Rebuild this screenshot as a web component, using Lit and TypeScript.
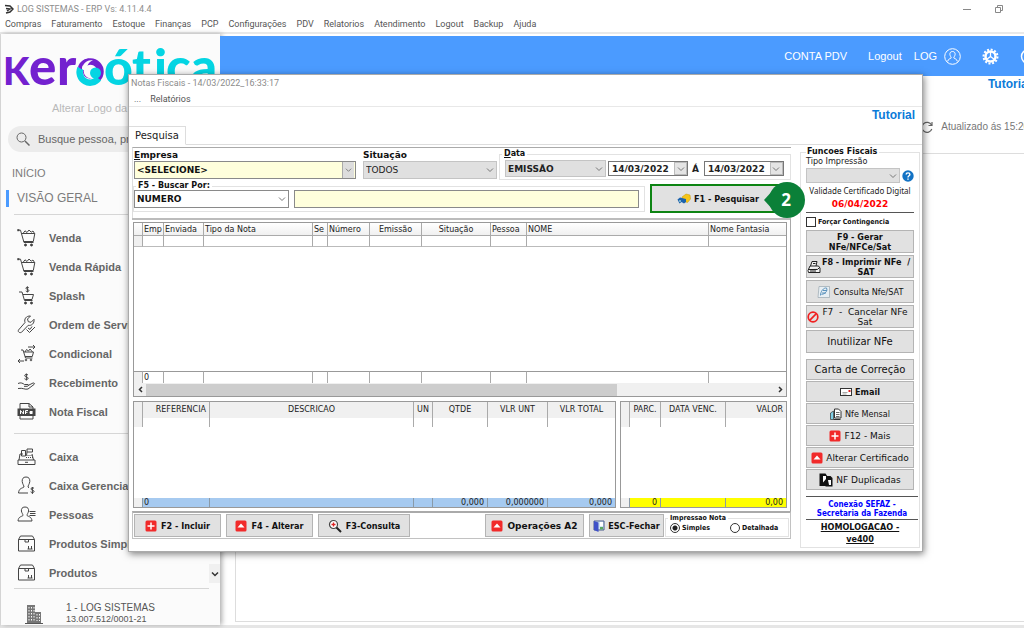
import { LitElement, html, css, svg, TemplateResult } from "lit";
import { customElement } from "lit/decorators.js";
import { classMap } from "lit/directives/class-map.js";

const icon = (name: string, box: string, body: TemplateResult) =>
  html`<svg class="icon ${name}" viewBox=${box} aria-hidden="true">${body}</svg>`;

const cart = svg`<path d="M.8 2.200h2.700L7 14.500h9.500M4.800 5.500h13l-1.500 8H6.700"/><path d="M6 5.500l2-2.700 2 1.700 2-2.500 2.200 2.200L16 3l1.500 2.500"/><circle cx="8.500" cy="17" r="1" fill="#333"/><circle cx="14.500" cy="17" r="1" fill="#333"/><path d="M.3 2.200h2" stroke-width="2"/>`;
const box = svg`<path d="M1.500 5.500h16v11.500h-16zM1.500 5.500l2-3.500h12l2 3.500M8 5.500v2.500h3.500V5.500M11.500 12v3M14.500 12v3M10.500 15h5"/>`;

const navIcons: Record<string, TemplateResult> = {
  cart,
  splash: svg`<path d="M2 6h3l2.500 8.500h8M6 8.500h10.500l-1.500 5H7.300"/><circle cx="8.500" cy="17" r="1" fill="#333"/><circle cx="14.500" cy="17" r="1" fill="#333"/><path d="M11.800 1.800c-1-1-3-.6-2.800.6.2 1.200 2.800.8 2.900 2.100.1 1.300-2.200 1.500-3.100.4M10.400.4v6"/>`,
  wrench: svg`<path d="M1.500 15l6.500-7.500C7 4 9 .8 13.500 1l-3 3 .8 2.700 2.700.6 3-3c.6 4-2.300 6.700-5.800 6l-6.700 7c-1.800 1-4-.5-3-2.300z"/><path d="M9.500 14.500l3 3L18 12M11 13l2 1.500 2-3"/>`,
  swap: svg`<path d="M4 6h2l2.500 8h7M7 8h9.500l-1.200 4.500H8"/><path d="M8 8l1.500-2.500L11.500 7l1.500-2 2.500 3M11 3h7M16 1l2 2-2 2M7 17H1M3 15l-2 2 2 2"/><circle cx="9" cy="16" r=".8"/><circle cx="14" cy="16" r=".8"/>`,
  hand: svg`<path d="M1 10.500c3-1.500 5 0 6.500 1h3.500c1 .8 0 1.800-1 1.800H7M11 12.500l5-2.500c1.500-.3 2 .8 1 1.500l-6 4.500c-3 1-5-1.500-10-.5"/><path d="M11 2c-1-1-3.500-.7-3.300.8.2 1.400 3.400.9 3.500 2.400.1 1.400-2.500 1.800-3.700.5M9.400.5v7"/>`,
  nfe: svg`<path d="M3 7V1.500h9L16 5v2M3 13.500V17h13v-3.500M12 1.500V5h4"/><rect x="1" y="7" width="17" height="6.500" fill="#444"/><path stroke="#fff" d="M3.500 12V8.500L6.500 12V8.500M8.500 12V8.500h2.500M8.500 10.300h2M15.500 11.500h-2.500v-2h2.300v1H13"/>`,
  register: svg`<path d="M1 13h17v4.500H1zM2 13l1-6h3M16.500 13l-1.500-6M4.500 3.500h4v5.500h-4zM10 2h5.500v3H10zM10 5l-.5 3.500M8 15.300h3"/><path stroke-dasharray="1 1" d="M9.500 8.500h6M9 10.500h7"/>`,
  manager: svg`<path d="M9 1c-3 0-4 2-3.800 4.500C5.500 8 7 9.500 7 11c-2 1.500-5 1-5.500 6H11M9 1c3 0 4 2 3.800 4.500C12.500 8 11 9.500 11 11l1 .8"/><path d="M17 12.300c-1-1-3.300-.6-3 .8.3 1.300 3 .9 3.100 2.300.1 1.300-2.400 1.500-3.500.4M15.400 11v7"/>`,
  people: svg`<path d="M8 2c-3 0-3.800 2-3.600 4 .3 2 1.600 3 1.600 4.500-2 1.500-4.500 1-5 5.500h14c-.5-4.500-3-4-5-5.500 0-1.500 1.300-2.500 1.600-4.500C11.800 4 11 2 8 2zM12.500 6.500h6M13 8.500h5.500M12.500 10.500h6"/>`,
  box,
};

const art = {
  plus: icon("s12", "0 0 12 12", svg`<rect x=".5" y=".5" width="11" height="11" rx="1.500" fill="#f12a2a"/><path d="M6 2.500v7M2.500 6h7" stroke="#fff" stroke-width="1.500"/>`),
  up: icon("s12", "0 0 12 12", svg`<rect x=".5" y=".5" width="11" height="11" rx="1.500" fill="#f12a2a"/><path d="M6 3.500l3.500 4h-7z" fill="#fff"/>`),
  lens: icon("s14", "0 0 14 14", svg`<circle cx="5.500" cy="5.500" r="4" fill="#fff" stroke="#444" stroke-width="1.200"/><path d="M5.500 3.500v4M3.500 5.500h4" stroke="#d22" stroke-width="1.300"/><path d="M8.500 8.500l4.500 4.500" stroke="#222" stroke-width="2"/>`),
  door: icon("s12", "0 0 12 12", svg`<path d="M1 1h10v9H1z" fill="#cfe6f4" stroke="#4a5a8a"/><path d="M1 1l4.500 1.500V12L1 10z" fill="#3f51c8"/><path d="M7 2h3v4H7z" fill="#fff"/><path d="M7 7h3v2.500H7z" fill="#5aa860"/>`),
  search: icon("s14", "0 0 14 14", svg`<path d="M5 5l4-3 4 1 .5 4-3 3.500L6 9z" fill="#f5c518" stroke="#c79400" stroke-width=".5"/><path d="M.5 7.500L3 5.500l6 1.500v3L7 11.500 4.500 10l-2 1.500z" fill="#1d63ad"/><circle cx="3" cy="9" r="1" fill="#9cd"/>`),
  print: icon("s14", "0 0 14 14", svg`<path d="M3.500 6L5 1.500h5L9 6M1 10.500l2-4.500h8.500l1.500 2v4.500H1.500zM1 9.500h9.500l2-2M3 11h6M6 3.500h2.500" fill="#f4f4f4" stroke="#222"/>`),
  note: icon("s14", "0 0 14 14", svg`<path d="M2 1.500h10.500v11H1z" fill="#e8eff4" stroke="#9aa8b0" stroke-width=".7"/><path d="M3.500 10.500c0-4 3-8 6-7.500 1.500 3-1.500 6-5 6.500M5 8h4M6 5.500h4" fill="none" stroke="#5c93bd"/>`),
  ban: icon("s12", "0 0 12 12", svg`<circle cx="6" cy="6" r="4.800" fill="none" stroke="#f02020" stroke-width="1.700"/><path d="M9.300 2.700L2.700 9.300" stroke="#f02020" stroke-width="1.700"/>`),
  mail: icon("s12", "0 0 12 12", svg`<rect x=".5" y="2.500" width="11" height="7" fill="#fff" stroke="#333"/><path d="M2.500 6.500h5M2.500 8h4" stroke="#aaa"/><path d="M8.500 4h2v2h-2z" fill="#e02020"/>`),
  month: icon("s12", "0 0 12 12", svg`<path d="M4.500 1h4l2.500 2.500V10H4.500z" fill="#fff" stroke="#333"/><path d="M6 4.500h3.500M6 6.500h3.500M6 8.500h3.500" stroke="#444" stroke-width=".8"/><path d="M.5 5l3-2v8.500h-3z" fill="#7fd0e6" stroke="#333" stroke-width=".7"/><path d="M3.500 11.500h7" stroke="#333"/>`),
  copies: icon("s14", "0 0 14 14", svg`<path d="M.5.5h6l2 3V13h-8zM6.500 3h5l2 2v8.500h-7z" fill="#111"/><path d="M4 3h3v3L4 9.500z" fill="#fff"/><path d="M9 7h3v5h-2z" fill="#fff"/>`),
};

const chevron = icon("chev", "0 0 8 8", svg`<path d="M1 2.500l3 3 3-3" fill="none" stroke="#777"/>`);

@customElement("app-root")
export class AppRoot extends LitElement {
  static styles = css`
    :host {
      display: flex;
      flex-direction: column;
      position: relative;
      box-sizing: border-box;
      height: 100vh;
      overflow: hidden;
      background: #fff;
      color: #222;
      font: 9px/12px "DejaVu Sans", sans-serif;
    }
    *, *::before { box-sizing: border-box; }
    button, input, select { font: inherit; color: inherit; margin: 0; border-radius: 0; }
    a { color: inherit; text-decoration: none; }
    .icon { display: block; flex: none; fill: none; }
    .s12 { width: 12px; height: 12px; }
    .s14 { width: 14px; height: 14px; }
    .chev { width: 8px; height: 8px; }

    /* main window */
    .caption { display: flex; align-items: center; height: 17px; padding: 0 20px 0 4px; gap: 3px; font: 9px/12px Roboto, sans-serif; color: #8d8d8d; flex: none; }
    .caption .grow { flex: 1; }
    .caption .wm { width: 10px; height: 10px; }
    .controls { display: flex; gap: 22px; }
    .menubar { display: flex; height: 17px; padding: 0 5px; gap: 10px; align-items: flex-start; border-bottom: 2px solid #e9e9e9; flex: none; }
    .menubar button, .dlg-menu button { border: 0; background: none; padding: 0; font: 9px/14px Roboto, sans-serif; color: #555; }
    .main { display: grid; grid-template-columns: 220px minmax(0, 1fr); flex: 1; min-height: 0; border-left: 1px solid #ddd; border-bottom: 3px solid #e6e6e6; }

    /* sidebar */
    .side { display: flex; flex-direction: column; background: #fbfbfb; font-family: "Liberation Sans", sans-serif; box-shadow: 2px 0 5px #aaa; min-height: 0; padding-top: 2px; margin-right: 1px; }
    .logo { display: block; width: 219px; height: 60px; flex: none; }
    .logo text { font-family: Lato, sans-serif; font-weight: 900; }
    .logo-link { color: #b9b9b9; font-size: 11px; line-height: 14px; padding: 5px 0 0 51px; }
    .find { display: flex; align-items: center; gap: 8px; height: 26px; margin: 11px 10px 0 7px; padding: 0 8px; border-radius: 13px; background: #ececec; flex: none; }
    .find input { border: 0; padding: 0; background: none; width: 100%; min-width: 0; font-size: 11px; }
    .find input::placeholder { color: #666; opacity: 1; }
    .sec { font-size: 11px; line-height: 14px; color: #7b7b7b; padding: 14px 0 0 11px; }
    .current { font-size: 12px; line-height: 17px; color: #7b7b7b; margin: 10px 0 7px 5px; padding-left: 8px; border-left: 3px solid #4b9bff; }
    .rule { border: 0; border-top: 1px solid #d6d6d6; margin: 0 11px 0 13px; flex: none; }
    .nav { display: flex; flex-direction: column; padding: 8px 0 7px 16px; flex: none; }
    .nav.last { padding-bottom: 1px; }
    .nav a { display: flex; align-items: center; gap: 13px; height: 29px; font-weight: bold; font-size: 11px; color: #666; }
    .nav-icon { width: 19px; height: 19px; stroke: #444; stroke-width: 1; }
    .scrollable { display: grid; grid-template-columns: 1fr 11px; align-items: end; }
    .scrollable .down { display: grid; place-items: center; height: 19px; margin-bottom: 5px; border: 0; padding: 0; background: #f0f0f0; }
    .down .icon path { stroke: #333; stroke-width: 1.500; }
    .company { display: flex; align-items: center; gap: 23px; padding: 13px 0 0 24px; color: #555; font-size: 10px; line-height: 12px; }
    .company small { display: block; font-size: 9px; line-height: 11px; }
    .building { width: 18px; height: 20px; }

    /* content behind the window */
    .content { display: flex; flex-direction: column; min-width: 0; font-family: "Liberation Sans", sans-serif; padding-top: 2px; }
    .top { display: flex; justify-content: flex-end; align-items: center; height: 40px; margin-left: -1px; background: #4b9bff; color: #fff; font-size: 11px; overflow: hidden; flex: none; position: relative; }
    .top a { display: flex; align-items: center; gap: 7px; margin-left: 21px; }
    .top a.user { margin-left: 12px; }
    .top a.cut { margin-right: -13px; }
    .s17 { width: 17px; height: 17px; }
    .tutorial { color: #0b7bd9; font: bold 12px/16px "Liberation Sans", sans-serif; }
    .content .tutorial { align-self: flex-end; margin-right: -7px; white-space: nowrap; }
    .updated { display: flex; align-items: center; align-self: flex-end; gap: 8px; margin: 28px -19px 0 0; font-size: 10px; line-height: 14px; color: #777; white-space: nowrap; }
    .card { flex: 1; margin: 19px 0 3px 14px; border: 1px solid #ddd; border-right: 0; }

    /* fiscal notes window */
    .dlg { position: absolute; top: 74px; left: 128px; right: 101px; background: #fff; border: 1px solid #aaa; box-shadow: 1px 2px 7px rgba(0, 0, 0, 0.5); padding-bottom: 3px; }
    .dlg-title { font: 9px/17px Roboto, sans-serif; color: #8b8b8b; padding-left: 2px; margin: 0; }
    .dlg-menu { display: flex; gap: 9px; height: 15px; padding-left: 5px; border-bottom: 1px solid #e8e8e8; align-items: flex-end; }
    .dlg-top { display: flex; justify-content: flex-end; height: 19px; padding: 0 7px 0 0; }
    .tabs { display: flex; height: 19px; border-bottom: 1px solid #ddd; }
    .tabs button { height: 19px; padding: 0 6px; border: 1px solid #ddd; border-bottom-color: #fff; border-left: 0; background: #fff; font-size: 10px; }
    .body { display: grid; grid-template-columns: minmax(0, 1fr) 120px; column-gap: 9px; padding: 2px 2px 0 3px; align-items: start; }
    fieldset { min-width: 0; margin: 0; padding: 0; border: 1px solid #e2e2e2; }
    legend { padding: 0 2px; margin-left: 2px; font-size: 8px; line-height: 8px; font-weight: bold; color: #111; }
    .filters { border-top: 1px solid #aaa; border-left: 1px solid #ddd; padding: 2px 0 5px; display: grid; gap: 2px; }
    .row-a { display: grid; grid-template-columns: 1fr 134px 292px; column-gap: 2px; padding-left: 1px; height: 30px; }
    .field { display: flex; flex-direction: column; min-width: 0; margin-right: 5px; }
    .field.wide { margin: 0; }
    .field label { font-weight: bold; line-height: 11px; color: #111; }
    u { text-underline-offset: 1px; }
    .sel { display: grid; grid-template-columns: minmax(0, 1fr) 14px; align-items: center; height: 18px; }
    .sel select { grid-area: 1 / 1 / 2 / 3; appearance: none; width: 100%; height: 100%; border: 1px solid #8a8a8a; background: #fff; padding: 0 2px; font-weight: bold; color: #111; }
    .sel .icon { grid-area: 1 / 2 / 2 / 3; pointer-events: none; justify-self: center; }
    .sel.cream select { background: #ffffdc; }
    .sel.cream .icon { background: #ddd; width: 12px; height: 16px; padding: 2px; border-left: 1px solid #aaa; justify-self: start; }
    .sel.gray select { background: #e0e0e0; border-color: #c4c4c4; color: #222; }
    .sel.plain select { font-weight: normal; }
    .dates { display: flex; align-items: center; padding: 2px 0 2px 5px; height: 21px; }
    .dates .sel { width: 101px; height: 17px; margin-right: 2px; }
    .dates b { margin: 0 5px 0 4px; }
    .date { display: flex; width: 80px; height: 15px; border: 1px solid #777; font-weight: bold; background: #fff; }
    .date input { flex: 1; min-width: 0; padding: 0 3px; border: 0; background: none; }
    .date button { width: 13px; padding: 0; border: 1px solid #bbb; background: #e4e4e4; display: grid; place-items: center; }
    .row-b { display: grid; grid-template-columns: minmax(0, 1fr) 141px; column-gap: 5px; height: 31px; }
    .by { height: 30px; }
    .by .in { display: flex; gap: 5px; padding: 0 5px 0 0; }
    .by .sel { width: 155px; }
    .cream-in { flex: 1; min-width: 0; height: 18px; border: 1px solid #8a8a8a; background: #ffffdc; padding: 0 3px; }
    .go { position: relative; padding: 2px 9px 0 0; }
    .go button { width: 100%; height: 29px; border: 2px solid #0d8413; background: #e1e1e1; padding: 0 6px 0 10px; }
    .step { position: absolute; top: 0; right: -14px; width: 41px; height: 36px; z-index: 2; }
    .step svg { display: block; width: 41px; height: 36px; }
    .step text { font: bold 17px "Open Sans", sans-serif; }
    .btn { display: flex; align-items: center; justify-content: center; gap: 3px; border: 1px solid #b4b4b4; background: #e1e1e1; padding: 0 2px; font: bold 9px/10px "DejaVu Sans Condensed", "DejaVu Sans", sans-serif; color: #111; }

    .grids { border-top: 2px solid #bcbcbc; border-right: 1px solid #a8a8a8; padding: 2px 3px 3px 1px; display: grid; gap: 4px; }
    .frame { border: 1px solid #999; min-width: 0; }
    table { width: 100%; table-layout: fixed; border-collapse: separate; border-spacing: 0; font-size: 8px; line-height: 9px; }
    th, td { padding: 0 1px; height: 11px; font-weight: normal; text-align: left; white-space: nowrap; overflow: hidden; border-right: 1px solid #aaa; }
    th:last-child, td:last-child { border-right: 0; }
    .c { text-align: center; }
    .r { text-align: right; padding-right: 3px; }
    td:first-child, th:first-child { background: #f0f0f0; }
    .notes th { height: 13px; background: linear-gradient(#fff, #f0f0f0); border-bottom: 1px solid #aaa; }
    .notes .blank td { border-bottom: 1px solid #bbb; }
    .notes .fill td { height: 124px; background: none; border: 0; }
    .notes tfoot td { height: 12px; border-top: 1px solid #999; }
    .items th { height: 16px; padding-bottom: 2px; background: #f0f0f0; }
    .items .blank td { height: 9px; }
    .items .fill td { height: 71px; background: none; border: 0; }
    .items tfoot td { height: 9px; border-color: #8a9aa8; background: #a6caf0; }
    .items.pay tfoot td { background: #ff0; }
    .items tfoot td:first-child { background: #f0f0f0; }
    .w9 { width: 9px; } .w15 { width: 15px; } .w19 { width: 19px; } .w21 { width: 21px; } .w31 { width: 31px; }
    .w36 { width: 36px; } .w40 { width: 40px; } .w42 { width: 42px; } .w52 { width: 52px; } .w55 { width: 55px; }
    .w60 { width: 60px; } .w65 { width: 65px; } .w67 { width: 67px; } .w69 { width: 69px; } .w77 { width: 77px; } .w109 { width: 109px; }
    .hbar { display: grid; grid-template-columns: 12px minmax(0, 3fr) minmax(0, 1fr) 12px; height: 13px; background: #f0f0f0; align-items: center; justify-items: center; }
    .hbar i { justify-self: stretch; height: 12px; background: #cdcdcd; }
    .hbar svg { width: 7px; height: 7px; stroke: #333; stroke-width: 1.500; }
    .pair { display: grid; grid-template-columns: minmax(0, 1fr) 167px; gap: 4px; }
    .bar { display: flex; gap: 5px; padding: 1px 1px 1px 1px; border: 1px solid #c2c2c2; border-top: 2px solid #aaa; height: 28px; }
    .bar .btn { height: 23px; width: 87px; gap: 4px; }
    .bar .btn.w92 { width: 92px; } .bar .btn.w99 { width: 99px; font-family: "DejaVu Sans", sans-serif; } .bar .btn.w75 { width: 75px; gap: 3px; margin-right: -4px; }
    .bar .grow { flex: 1; }
    .bar fieldset { width: 124px; height: 23px; }
    .bar legend, .bar label, .force { font: bold 7px/8px "DejaVu Sans Condensed", "DejaVu Sans", sans-serif; color: #111; }
    .bar legend { line-height: 8px; }
    .radios { display: flex; gap: 20px; padding: 0 0 0 4px; }
    .radios label { display: flex; align-items: center; gap: 2px; height: 12px; }
    input[type="radio"], input[type="checkbox"] { appearance: none; width: 10px; height: 10px; border: 1px solid #333; background: #fff; flex: none; }
    input[type="radio"] { border-radius: 50%; }
    input[type="radio"]:checked { background: radial-gradient(circle, #222 0 2px, #fff 3px); }

    /* fiscal functions */
    .funcs { margin-top: 1px; padding: 0 0 2px 5px; }
    .funcs legend { margin-left: 0; padding: 0 2px 0 1px; }
    .funcs .kind { display: block; font: 9px/10px "DejaVu Sans Condensed", "DejaVu Sans", sans-serif; }
    .pick { display: grid; grid-template-columns: 94px 12px; gap: 2px; align-items: center; margin-top: 2px; }
    .pick .sel { height: 15px; }
    .help { border: 0; padding: 0; background: none; }
    .valid { margin: 2px 0 0; font: 8px/12px "Noto Sans", sans-serif; text-align: center; width: 108px; white-space: nowrap; }
    .expires { margin: 1px 0 2px; width: 108px; text-align: center; font-weight: bold; color: #f00; }
    .line { border: 0; border-top: 1px solid #555; margin: 0; width: 108px; }
    .force { display: flex; align-items: center; gap: 2px; margin: 4px 0 3px; height: 10px; }
    .stack { display: grid; gap: 2px; width: 108px; }
    .stack .btn { height: 23px; white-space: pre; }
    .stack.low { gap: 1px; margin-top: 6px; }
    .stack.low .btn { height: 21px; }
    .stack .n { font-weight: normal; }
    .stack .v { font: 9px/10px "DejaVu Sans", sans-serif; }
    .stack .x { font: 10px/12px "DejaVu Sans", sans-serif; }
    .stack .edge { justify-content: flex-start; padding-left: 0; gap: 0; }
    .stack .edge span { flex: 1; }
    .sefaz { margin: 6px 0 0; padding: 3px 0 1px; width: 112px; border: solid #555; border-width: 1px 0; font: bold 8px/9px "DejaVu Sans Condensed", "DejaVu Sans", sans-serif; color: #00f; text-align: center; }
    .env { margin: 1px 0 0; width: 108px; font: bold 9px/12px "DejaVu Sans Condensed", "DejaVu Sans", sans-serif; text-align: center; text-decoration: underline; color: #111; }
  `;

  private menus = ["Compras", "Faturamento", "Estoque", "Finanças", "PCP", "Configurações", "PDV", "Relatorios", "Atendimento", "Logout", "Backup", "Ajuda"];
  private sales = [["cart", "Venda"], ["cart", "Venda Rápida"], ["splash", "Splash"], ["wrench", "Ordem de Serviço"], ["swap", "Condicional"], ["hand", "Recebimento"], ["nfe", "Nota Fiscal"]];
  private office = [["register", "Caixa"], ["manager", "Caixa Gerencial"], ["people", "Pessoas"], ["box", "Produtos Simples"], ["box", "Produtos"]];

  private nav(items: string[][], last = false) {
    return html`<nav class=${classMap({ nav: true, last })}>
      ${items.map(([i, t]) => html`<a href="#">${icon("nav-icon", "0 0 19 19", navIcons[i])}${t}</a>`)}
    </nav>`;
  }

  private select(id: string, value: string, kind: string, label = "") {
    return html`<span class="sel ${kind}"><select id=${id} aria-label=${label || id}><option>${value}</option></select>${chevron}</span>`;
  }

  private date(label: string) {
    return html`<span class="date"><input type="text" aria-label=${label} value="14/03/2022" /><button type="button" aria-label="Calendário">${chevron}</button></span>`;
  }

  private grid(kind: string, cols: [string, string, string][], foot: string[]) {
    return html`<table class=${kind}>
      <colgroup>${cols.map(([w]) => html`<col class=${w} />`)}</colgroup>
      <thead><tr>${cols.map(([, a, t]) => html`<th class=${a}>${t}</th>`)}</tr></thead>
      <tbody>
        <tr class="blank">${cols.map(() => html`<td></td>`)}</tr>
        <tr class="fill"><td colspan=${cols.length}></td></tr>
      </tbody>
      <tfoot><tr>${foot.map((t, n) => html`<td class=${n > 1 || kind.includes("pay") ? "r" : ""}>${t}</td>`)}</tr></tfoot>
    </table>`;
  }

  private sidebar() {
    return html`<aside class="side">
      <svg class="logo" viewBox="0 0 219 60" role="img" aria-label="keroótica">
        <g fill="#7321cf"><text x="2" y="49" font-size="38">K</text><text x="28" y="49" font-size="51">e</text><text x="56" y="49" font-size="51">r</text></g>
        <circle cx="89.500" cy="35.500" r="10" fill="none" stroke="#7321cf" stroke-width="6.500"/>
        <path d="M80.500 28.500a10.500 10.500 0 0 0 16 15" fill="none" stroke="#fbfbfb" stroke-width="9"/>
        <path d="M79.500 32a10.500 10.500 0 0 0 18 10.500" fill="none" stroke="#04d5e3" stroke-width="6.500"/>
        <path d="M77 31c2-6 7-9 12-8.500-5 2-8 6-8 11z" fill="#7321cf"/>
        <path d="M81 33c1-6 5-9 11-9-6 3-7 8-5 13z" fill="#fbfbfb"/>
        <circle cx="94.500" cy="37" r="5.500" fill="#04d5e3"/>
        <g fill="#04d5e3"><text x="103" y="49" font-size="50">ó</text><text x="131" y="49" font-size="50">t</text><text x="153" y="49" font-size="50">i</text><text x="165" y="49" font-size="51">c</text><text x="190" y="49" font-size="51">a</text></g>
      </svg>
      <a class="logo-link" href="#">Alterar Logo da Empresa</a>
      <label class="find">
        ${icon("s14", "0 0 14 14", svg`<circle cx="5.500" cy="5.500" r="4.500" stroke="#666"/><path d="M9 9l4.500 4.500" stroke="#666" stroke-width="1.500"/>`)}
        <input type="text" placeholder="Busque pessoa, produto" aria-label="Busca" />
      </label>
      <div class="sec">INÍCIO</div>
      <a class="current" href="#">VISÃO GERAL</a>
      <hr class="rule" />
      ${this.nav(this.sales)}
      <hr class="rule" />
      <div class="scrollable">${this.nav(this.office, true)}<button class="down" aria-label="Descer">${chevron}</button></div>
      <hr class="rule" />
      <div class="company">
        ${icon("building", "0 0 18 20", svg`<path d="M2 1h8v18H2zM10 8h6v11h-6z" fill="#777"/><path d="M4 3v14M6.500 3v14M9 3v14M12 10v7M14.500 10v7" stroke="#fbfbfb" stroke-dasharray="1.500 1.500"/><path d="M0 19.500h18" stroke="#555"/>`)}
        <div>1 - LOG SISTEMAS<small>13.007.512/0001-21</small></div>
      </div>
    </aside>`;
  }

  private filters() {
    return html`<form class="filters" @submit=${(e: Event) => e.preventDefault()}>
      <div class="row-a">
        <div class="field"><label for="empresa"><u>E</u>mpresa</label>${this.select("empresa", "<SELECIONE>", "cream", "Empresa")}</div>
        <div class="field wide"><label for="situacao">Situação</label>${this.select("situacao", "TODOS", "gray plain", "Situação")}</div>
        <fieldset><legend><u>D</u>ata</legend>
          <div class="dates">${this.select("data", "EMISSÃO", "gray", "Data")}${this.date("Data inicial")}<b>Á</b>${this.date("Data final")}</div>
        </fieldset>
      </div>
      <div class="row-b">
        <fieldset class="by"><legend>F5 - Buscar Por:</legend>
          <div class="in">${this.select("buscar", "NUMERO", "", "Buscar por")}<input class="cream-in" type="text" aria-label="Texto da busca" /></div>
        </fieldset>
        <div class="go">
          <button class="btn" type="submit">${art.search}F1 - Pesquisar</button>
          <span class="step"><svg viewBox="0 0 41 36"><path d="M0 18L10 7h10v22H10z" fill="#0b8038"/><circle cx="23" cy="18" r="18" fill="#0b8038"/><text x="22" y="24" text-anchor="middle" fill="#fff">2</text></svg></span>
        </div>
      </div>
    </form>`;
  }

  private functions() {
    return html`<fieldset class="funcs">
      <legend>Funcoes Fiscais</legend>
      <label class="kind" for="tipo">Tipo Impressão</label>
      <div class="pick">${this.select("tipo", "", "gray", "Tipo Impressão")}
        <button class="help" aria-label="Ajuda">${icon("s12", "0 0 12 12", svg`<circle cx="6" cy="6" r="5.700" fill="#1272c4"/><path d="M4.200 4.600c0-2.400 3.700-2.200 3.700-.2C7.900 5.800 6 5.700 6 7.400M6 8.500v1.300" stroke="#fff" stroke-width="1.400"/>`)}</button>
      </div>
      <p class="valid">Validade Certificado Digital</p>
      <p class="expires">06/04/2022</p>
      <hr class="line" />
      <label class="force"><input type="checkbox" />Forçar Contingencia</label>
      <div class="stack">
        <button class="btn">${"F9 - Gerar\nNFe/NFCe/Sat"}</button>
        <button class="btn edge">${art.print}<span>${"F8 - Imprimir NFe  /\nSAT"}</span></button>
        <button class="btn n">${art.note}Consulta Nfe/SAT</button>
        <button class="btn n v edge">${art.ban}<span>${"F7  -  Cancelar NFe\nSat"}</span></button>
        <button class="btn x">Inutilizar NFe</button>
      </div>
      <div class="stack low">
        <button class="btn x">Carta de Correção</button>
        <button class="btn">${art.mail}Email</button>
        <button class="btn n">${art.month}Nfe Mensal</button>
        <button class="btn v">${art.plus}F12 - Mais</button>
        <button class="btn v">${art.up}Alterar Certificado</button>
        <button class="btn v">${art.copies}NF Duplicadas</button>
      </div>
      <p class="sefaz">Conexão SEFAZ -<br />Secretaria da Fazenda</p>
      <p class="env">HOMOLOGACAO -<br />ve400</p>
    </fieldset>`;
  }

  private dialog() {
    return html`<section class="dlg" role="dialog" aria-label="Notas Fiscais">
      <h1 class="dlg-title">Notas Fiscais - 14/03/2022_16:33:17</h1>
      <div class="dlg-menu"><button>...</button><button>Relatórios</button></div>
      <div class="dlg-top"><a class="tutorial" href="#">Tutorial</a></div>
      <div class="tabs"><button>Pesquisa</button></div>
      <div class="body">
        <div>
          ${this.filters()}
          <div class="grids">
            <div class="frame">
              ${this.grid("notes", [["w9", "", ""], ["w21", "", "Emp"], ["w40", "", "Enviada"], ["w109", "", "Tipo da Nota"], ["w15", "", "Se"], ["w42", "", "Número"], ["w52", "c", "Emissão"], ["w69", "c", "Situação"], ["w36", "", "Pessoa"], ["", "", "NOME"], ["w77", "", "Nome Fantasia"]], ["", "0", "", "", "", "", "", "", "", "", ""])}
              <div class="hbar"><svg viewBox="0 0 7 7" fill="none"><path d="M5 1L2.500 3.500 5 6"/></svg><i></i><span></span><svg viewBox="0 0 7 7" fill="none"><path d="M2 1l2.500 2.500L2 6"/></svg></div>
            </div>
            <div class="pair">
              <div class="frame">${this.grid("items", [["w9", "", ""], ["w67", "r", "REFERENCIA"], ["", "c", "DESCRICAO"], ["w19", "c", "UN"], ["w55", "c", "QTDE"], ["w60", "c", "VLR UNT"], ["w67", "c", "VLR TOTAL"]], ["", "0", "", "", "0,000", "0,000000", "0,000"])}</div>
              <div class="frame">${this.grid("items pay", [["w9", "", ""], ["w31", "c", "PARC."], ["w65", "c", "DATA VENC."], ["", "r", "VALOR"]], ["", "0", "", "0,00"])}</div>
            </div>
          </div>
          <div class="bar">
            <button class="btn">${art.plus}F2 - Incluir</button>
            <button class="btn">${art.up}F4 - Alterar</button>
            <button class="btn w92">${art.lens}F3-Consulta</button>
            <span class="grow"></span>
            <button class="btn w99">${art.up}Operações A2</button>
            <button class="btn w75">${art.door}ESC-Fechar</button>
            <fieldset><legend>Impressao Nota</legend>
              <div class="radios"><label><input type="radio" name="nota" checked />Simples</label><label><input type="radio" name="nota" />Detalhada</label></div>
            </fieldset>
          </div>
        </div>
        ${this.functions()}
      </div>
    </section>`;
  }

  render() {
    return html`
      <header class="caption">
        ${icon("wm", "0 0 10 10", svg`<path d="M1 1.500l5 .5 3 3-3 3-4 1M2 4.500l4 .5-3 2" stroke="#333" stroke-width="1.500"/>`)}
        <span class="grow">LOG SISTEMAS - ERP Vs: 4.11.4.4</span>
        <span class="controls">
          ${icon("wm", "0 0 10 10", svg`<path d="M1 5.500h8" stroke="#888"/>`)}
          ${icon("wm", "0 0 10 10", svg`<path d="M1.500 3.500h5v5h-5zM3.500 3.500v-2h5v5h-2" stroke="#888"/>`)}
        </span>
      </header>
      <nav class="menubar">${this.menus.map((m) => html`<button>${m}</button>`)}</nav>
      <div class="main">
        ${this.sidebar()}
        <main class="content">
          <div class="top">
            <a href="#">CONTA PDV</a><a href="#">Logout</a>
            <a class="user" href="#">LOG ${icon("s17", "0 0 17 17", svg`<circle cx="8.500" cy="8.500" r="7.800" stroke="#fff"/><path d="M8.500 3.500c-2 0-2.800 1.500-2.600 3 .2 1.700 1.300 2.300 1.300 3.500-1.200 1-3 .8-3.500 3.300M8.500 3.500c2 0 2.800 1.500 2.600 3-.2 1.700-1.300 2.300-1.300 3.500 1.200 1 3 .8 3.500 3.300" stroke="#fff"/>`)}</a>
            <a href="#" aria-label="Configurações">${icon("s17", "0 0 17 17", svg`<circle cx="8.500" cy="8.500" r="5" stroke="#fff" stroke-width="2.500"/><circle cx="8.500" cy="8.500" r="7" stroke="#fff" stroke-width="2" stroke-dasharray="2 1.660"/><path d="M8.500 8.500V3.500M8.500 8.500l-4 3M8.500 8.500l4 3" stroke="#fff" stroke-width="1.300"/>`)}</a>
            <a class="cut" href="#" aria-label="Sair">${icon("s17", "0 0 17 17", svg`<circle cx="8.500" cy="8.500" r="7" stroke="#fff" stroke-width="1.500"/>`)}</a>
          </div>
          <a class="tutorial" href="#">Tutorial</a>
          <div class="updated">${icon("s12", "0 0 12 12", svg`<path d="M10.500 4A5 5 0 1 0 10.800 8M11 1v3.500H7.500" stroke="#666" stroke-width="1.200"/>`)}Atualizado ás 15:20:30</div>
          <div class="card"></div>
        </main>
      </div>
      ${this.dialog()}
    `;
  }
}
